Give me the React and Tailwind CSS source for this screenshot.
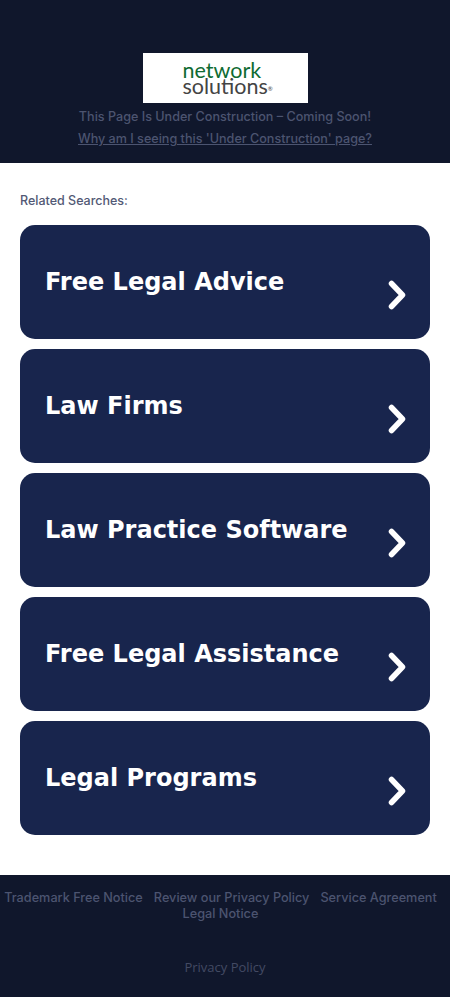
const searches = ['Free Legal Advice', 'Law Firms', 'Law Practice Software', 'Free Legal Assistance', 'Legal Programs'];

const Chevron = () => (
  <svg width="18" height="30" viewBox="0 0 18 30" fill="none" className="mt-[26px]">
    <path d="M3.5 3.5 L14.5 15 L3.5 26.5" stroke="#fff" strokeWidth="5.5" strokeLinecap="round" strokeLinejoin="round" />
  </svg>
);

const App = () => {
  return (
    <div className="min-h-[997px] bg-white font-['Inter',sans-serif] font-medium">
      <header className="h-[163px] bg-[#10172c] pt-[53px] text-center">
        <div className="mx-auto h-[50px] w-[165px] bg-white pl-[40px] pt-[9px] text-left font-['Lato',sans-serif] font-normal">
          <span className="block text-[21.5px] leading-[16px] text-[#0f6b32]">network</span>
          <span className="block text-[21.5px] leading-[16px] text-[#444]">solutions<sup className="text-[6px]">®</sup></span>
        </div>
        <p className="mt-[6px] text-[12.6px] leading-[16px] text-[#4c5470]">This Page Is Under Construction – Coming Soon!</p>
        <a className="mt-[6px] block text-[12.6px] leading-[16px] text-[#4c5470] underline">Why am I seeing this 'Under Construction' page?</a>
      </header>

      <main className="h-[712px] px-5 pt-[30px]">
        <p className="text-[12.5px] leading-[16px] text-[#525975]">Related Searches:</p>
        <div className="mt-[16px] flex flex-col gap-[10px]">
          {searches.map((s) => (
            <a key={s} className="flex h-[114px] items-center justify-between rounded-[15px] bg-[#18254d] pl-[25px] pr-[24px]">
              <span className="font-['DejaVu_Sans',sans-serif] text-[24px] font-bold text-white">{s}</span>
              <Chevron />
            </a>
          ))}
        </div>
      </main>

      <footer className="h-[122px] bg-[#10172c] pt-[15px] text-center text-[12.7px] leading-[16px] text-[#4c5470]">
        <div className="flex justify-center gap-[11px] pr-[9px]">
          <span>Trademark Free Notice</span>
          <span>Review our Privacy Policy</span>
          <span>Service Agreement</span>
        </div>
        <div className="pr-[9px]">Legal Notice</div>
        <div className="mt-[37px] font-['Open_Sans',sans-serif] text-[13px] font-normal text-[#434a63]">Privacy Policy</div>
      </footer>
    </div>
  );
};

export default App;
